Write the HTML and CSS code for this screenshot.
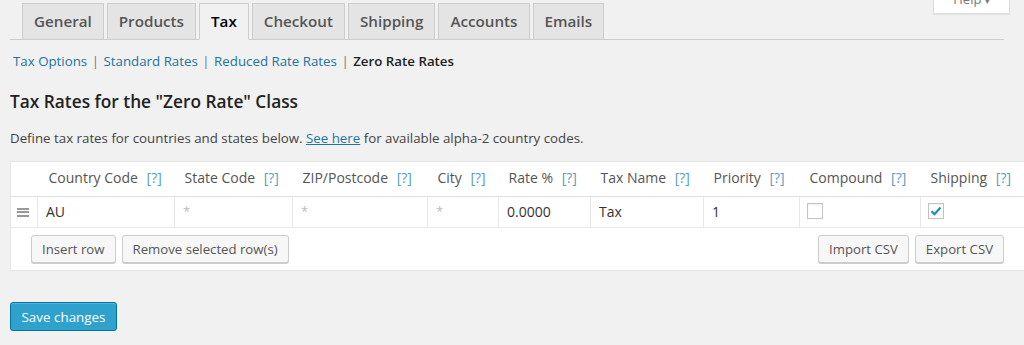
FILE: index.html
```html
<!DOCTYPE html>
<html lang="en">
<head>
  <meta charset="UTF-8">
  <title>Tax Settings</title>
  <link rel="stylesheet" href="styles.css">
</head>
<body>

  <div class="help-tab">Help <span class="caret">&#9662;</span></div>

  <div class="wrap">
    <nav class="nav-tabs">
      <a class="nav-tab">General</a>
      <a class="nav-tab">Products</a>
      <a class="nav-tab active">Tax</a>
      <a class="nav-tab">Checkout</a>
      <a class="nav-tab">Shipping</a>
      <a class="nav-tab">Accounts</a>
      <a class="nav-tab">Emails</a>
    </nav>

    <ul class="subsub">
      <li><a href="#">Tax Options</a><span class="sep">|</span></li>
      <li><a href="#">Standard Rates</a><span class="sep">|</span></li>
      <li><a href="#">Reduced Rate Rates</a><span class="sep">|</span></li>
      <li><strong>Zero Rate Rates</strong></li>
    </ul>

    <h3>Tax Rates for the "Zero Rate" Class</h3>
    <p class="desc">Define tax rates for countries and states below. <a href="#">See here</a> for available alpha-2 country codes.</p>

    <table class="rates">
      <colgroup>
        <col style="width: 27px">
        <col style="width: 137px">
        <col style="width: 118px">
        <col style="width: 135px">
        <col style="width: 71px">
        <col style="width: 92px">
        <col style="width: 113px">
        <col style="width: 96px">
        <col style="width: 121px">
        <col style="width: 110px">
      </colgroup>
      <thead>
        <tr>
          <th></th>
          <th>Country Code <span class="tip">[?]</span></th>
          <th>State Code <span class="tip">[?]</span></th>
          <th>ZIP/Postcode <span class="tip">[?]</span></th>
          <th>City <span class="tip">[?]</span></th>
          <th>Rate % <span class="tip">[?]</span></th>
          <th>Tax Name <span class="tip">[?]</span></th>
          <th>Priority <span class="tip">[?]</span></th>
          <th>Compound <span class="tip">[?]</span></th>
          <th>Shipping <span class="tip">[?]</span></th>
        </tr>
      </thead>
      <tbody>
        <tr>
          <td class="sort"><span class="handle"></span></td>
          <td>AU</td>
          <td class="ph">*</td>
          <td class="ph">*</td>
          <td class="ph">*</td>
          <td>0.0000</td>
          <td>Tax</td>
          <td>1</td>
          <td><span class="check"></span></td>
          <td>
            <span class="check">
              <svg width="12" height="10" viewBox="0 0 12 10"><path d="M1.5 5.2 L4.5 8.2 L10.5 1.5" fill="none" stroke="#1e8cbe" stroke-width="2.2"/></svg>
            </span>
          </td>
        </tr>
      </tbody>
      <tfoot>
        <tr>
          <td colspan="10">
            <div class="foot">
              <div class="btns">
                <button class="btn">Insert row</button>
                <button class="btn">Remove selected row(s)</button>
              </div>
              <div class="btns">
                <button class="btn">Import CSV</button>
                <button class="btn">Export CSV</button>
              </div>
            </div>
          </td>
        </tr>
      </tfoot>
    </table>

    <button class="save">Save changes</button>
  </div>

</body>
</html>
```
FILE: styles.css
```css
* {
  margin: 0;
  padding: 0;
  box-sizing: border-box;
}

body {
  font-family: 'Open Sans', sans-serif;
  background-color: #f1f1f1;
  color: #444;
  font-size: 13px;
  overflow: hidden;
  position: relative;
  width: 1024px;
  height: 345px;
}

a {
  color: #21759b;
  text-decoration: none;
}

.help-tab {
  position: absolute;
  left: 933px;
  top: -13px;
  width: 77px;
  height: 27px;
  background: #fff;
  border: 1px solid #ddd;
  box-shadow: 0 1px 1px rgba(0, 0, 0, 0.05);
  color: #777;
  font-size: 13px;
  line-height: 22px;
  text-align: center;
}

.help-tab .caret {
  font-size: 9px;
}

.wrap {
  padding: 3px 10px 0;
}

.nav-tabs {
  display: flex;
  gap: 3px;
  padding-left: 12px;
  border-bottom: 1px solid #ccc;
  margin-right: 10px;
}

.nav-tab {
  display: block;
  height: 37px;
  padding: 0 11px;
  margin-bottom: -1px;
  background: #e4e4e4;
  border: 1px solid #ccc;
  color: #555;
  font-size: 15.2px;
  font-weight: 600;
  line-height: 35px;
}

.nav-tab.active {
  background: #f1f1f1;
  border-bottom-color: #f1f1f1;
  color: #000;
}

.subsub {
  list-style: none;
  display: flex;
  margin-top: 12px;
  color: #777;
  font-size: 13.3px;
  line-height: 18px;
  padding-left: 3px;
}

.subsub li {
  white-space: nowrap;
}

.sep {
  margin: 0 4.5px;
}

.subsub strong {
  color: #222;
  font-weight: 600;
}

h3 {
  font-size: 17.3px;
  font-weight: 600;
  color: #222;
  margin-top: 20px;
  line-height: 24px;
}

.desc {
  margin-top: 14px;
  font-size: 13.3px;
  line-height: 20px;
}

.desc a {
  text-decoration: underline;
}

.rates {
  margin-top: 13px;
  width: 1020px;
  table-layout: fixed;
  border-collapse: collapse;
  background: #fff;
  border: 1px solid #e5e5e5;
}

.rates th {
  height: 35px;
  text-align: left;
  font-weight: normal;
  font-size: 14px;
  color: #555;
  padding: 0 10px 3px;
  white-space: nowrap;
  border-bottom: 1px solid #e1e1e1;
}

.rates th:nth-child(2) {
  padding-left: 11px;
}

.tip {
  color: #5b9dbd;
  margin-left: 5px;
}

.rates tbody td {
  height: 31px;
  font-size: 14px;
  color: #333;
  padding: 0 8px 2px;
  border: 1px solid #e8e8e8;
  border-top-color: #e1e1e1;
}

.rates tbody td.ph {
  color: #bbb;
  font-size: 13px;
}

.rates tbody td.sort {
  border-left: none;
  padding: 0 0 0 6px;
}

.handle {
  display: block;
  width: 12px;
  height: 9px;
  border-top: 2px solid #999;
  border-bottom: 2px solid #999;
  position: relative;
}

.handle::after {
  content: '';
  position: absolute;
  left: 0;
  right: 0;
  top: 1.5px;
  border-top: 2px solid #999;
}

.check {
  display: flex;
  align-items: center;
  justify-content: center;
  width: 16px;
  height: 16px;
  margin-left: -1px;
  border: 1px solid #c3c3c3;
  background: #fff;
  box-shadow: inset 0 1px 2px rgba(0, 0, 0, 0.07);
}

.foot {
  display: flex;
  justify-content: space-between;
  height: 42px;
  align-items: center;
  padding: 0 26px 0 20px;
}

.btns {
  display: flex;
  gap: 6px;
}

.btn {
  font-family: 'Open Sans', sans-serif;
  font-size: 13.2px;
  color: #555;
  background: #f7f7f7;
  border: 1px solid #ccc;
  border-radius: 3px;
  box-shadow: 0 1px 0 #ccc;
  height: 28px;
  padding: 0 10px;
}

.save {
  margin-top: 31px;
  font-family: 'Open Sans', sans-serif;
  font-size: 13.4px;
  color: #fff;
  background: #2ea2cc;
  border: 1px solid #0074a2;
  border-radius: 3px;
  box-shadow: inset 0 1px 0 rgba(120, 200, 230, 0.5);
  height: 29px;
  width: 107px;
}
```
